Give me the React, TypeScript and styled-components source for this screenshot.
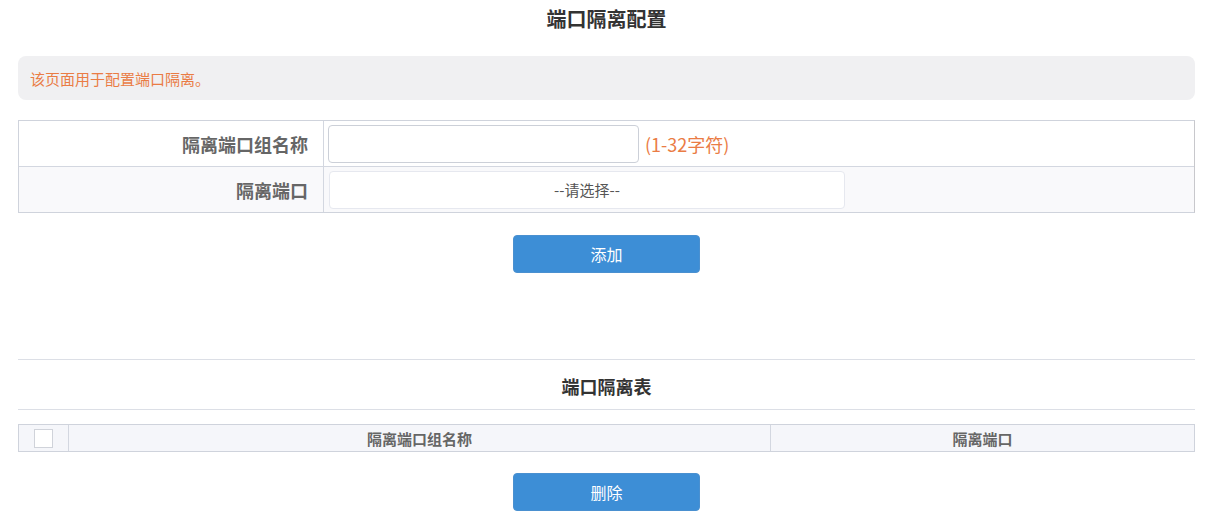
import React from "react";
import styled, { createGlobalStyle } from "styled-components";

const Global = createGlobalStyle`
  html, body { margin: 0; padding: 0; background: #fff; }
  body { font-family: "Noto Sans CJK SC", "Noto Sans", sans-serif; color: #333; }
  * { box-sizing: border-box; }
`;

const Page = styled.div`
  padding: 0 16px 0 18px;
  width: 1211px;
`;

const Title = styled.h1`
  margin: 0;
  height: 40px;
  line-height: 38px;
  text-align: center;
  font-size: 20px;
  font-weight: 700;
  color: #333;
`;

const Notice = styled.div`
  margin-top: 16px;
  height: 44px;
  background: #f0f0f2;
  border-radius: 8px;
  padding: 0 12px;
  display: flex;
  align-items: center;
  font-size: 15px;
  color: #ea7c45;
`;

const FormTable = styled.div`
  margin-top: 20px;
  border: 1px solid #cfd3dc;
  border-right-color: #c8c8cc;
`;

const FormRow = styled.div<{ $alt?: boolean }>`
  box-sizing: content-box;
  display: grid;
  grid-template-columns: 305px 1fr;
  height: 45px;
  background: ${(p) => (p.$alt ? "#f9f9fb" : "#fff")};
  & + & { border-top: 1px solid #d3d7e0; }
`;

const Label = styled.div`
  border-right: 1px solid #d3d7e0;
  display: flex;
  align-items: center;
  justify-content: flex-end;
  padding-right: 15px;
  font-size: 18px;
  font-weight: 700;
  color: #666;
`;

const Field = styled.div`
  display: flex;
  align-items: center;
  padding-left: 4px;
  gap: 6px;
`;

const TextInput = styled.input`
  width: 311px;
  height: 38px;
  border: 1px solid #ccd0d8;
  border-radius: 4px;
  background: #fff;
  outline: none;
`;

const Hint = styled.span`
  font-size: 18px;
  color: #ea7c45;
`;

const SelectBox = styled.div`
  margin-left: 1px;
  width: 516px;
  height: 38px;
  border: 1px solid #e6e8ef;
  border-radius: 4px;
  background: #fff;
  display: flex;
  align-items: center;
  justify-content: center;
  font-size: 15px;
  color: #555;
`;

const ButtonRow = styled.div<{ $top: number }>`
  display: flex;
  justify-content: center;
  margin-top: ${(p) => p.$top}px;
`;

const Button = styled.button`
  width: 187px;
  height: 38px;
  border: 1px solid #4a90d0;
  border-radius: 4px;
  background: #3d8ed6;
  color: #fff;
  font-family: inherit;
  font-size: 16px;
`;

const Spacer = styled.div`
  height: 86px;
`;

const Divider = styled.hr`
  margin: 0;
  border: none;
  border-top: 1px solid #dcdfe6;
`;

const SectionTitle = styled.h2`
  margin: 0;
  height: 49px;
  line-height: 52px;
  text-align: center;
  font-size: 18px;
  font-weight: 700;
  color: #333;
`;

const ListTable = styled.div`
  margin-top: 14px;
  display: grid;
  grid-template-columns: 50px 702px 1fr;
  height: 28px;
  border: 1px solid #cfd3dc;
  background: #f5f6fa;
`;

const HeadCell = styled.div<{ $last?: boolean }>`
  display: flex;
  align-items: center;
  justify-content: center;
  font-size: 15px;
  font-weight: 700;
  color: #666;
  border-right: ${(p) => (p.$last ? "none" : "1px solid #d3d7e0")};
`;

const Check = styled.span`
  width: 19px;
  height: 19px;
  border: 1px solid #d0d3da;
  background: #fff;
`;

export default function App() {
  return (
    <Page>
      <Global />
      <Title>端口隔离配置</Title>
      <Notice>该页面用于配置端口隔离。</Notice>
      <FormTable>
        <FormRow>
          <Label>隔离端口组名称</Label>
          <Field>
            <TextInput />
            <Hint>(1-32字符)</Hint>
          </Field>
        </FormRow>
        <FormRow $alt>
          <Label>隔离端口</Label>
          <Field>
            <SelectBox>--请选择--</SelectBox>
          </Field>
        </FormRow>
      </FormTable>
      <ButtonRow $top={22}>
        <Button>添加</Button>
      </ButtonRow>
      <Spacer />
      <Divider />
      <SectionTitle>端口隔离表</SectionTitle>
      <Divider />
      <ListTable>
        <HeadCell>
          <Check />
        </HeadCell>
        <HeadCell>隔离端口组名称</HeadCell>
        <HeadCell $last>隔离端口</HeadCell>
      </ListTable>
      <ButtonRow $top={21}>
        <Button>删除</Button>
      </ButtonRow>
    </Page>
  );
}
